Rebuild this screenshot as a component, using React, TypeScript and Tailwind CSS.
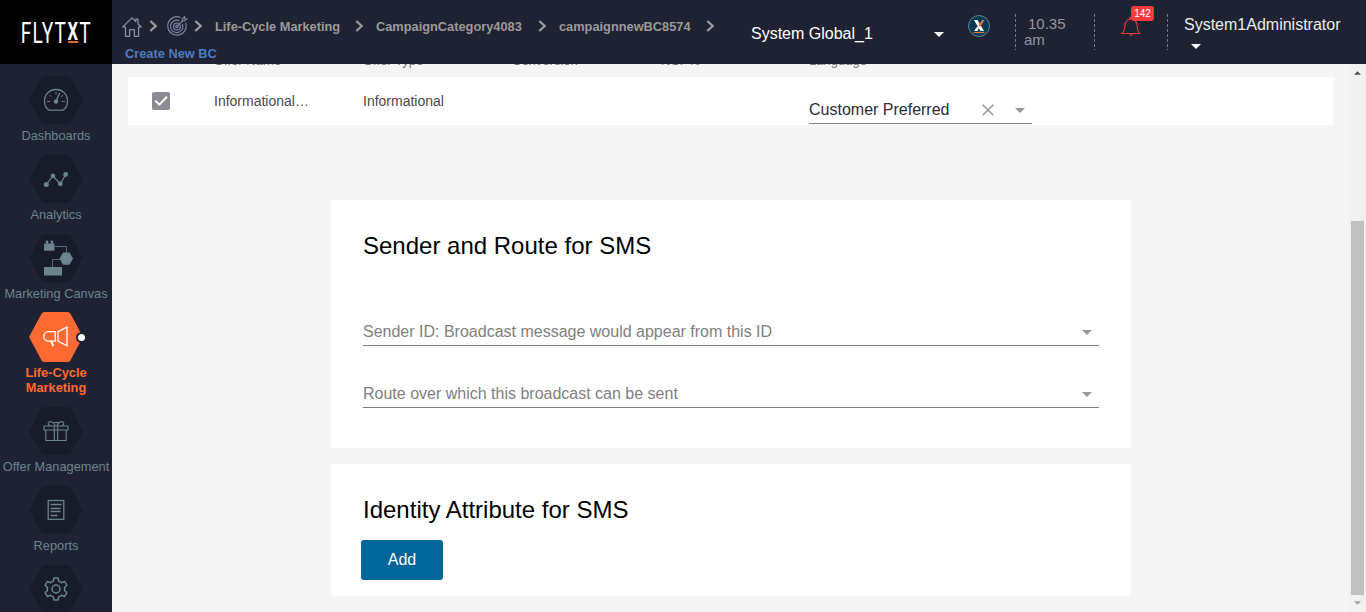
import React from "react";

const Caret = ({ className = "" }: { className?: string }) => (
  <svg className={className} width="10" height="5" viewBox="0 0 10 5" fill="currentColor">
    <path d="M0 0h10L5 5z" />
  </svg>
);

const Chevron = () => (
  <svg className="-mt-px" width="9" height="12" viewBox="0 0 9 12" fill="none" stroke="#9a9a9a" strokeWidth="2.3">
    <path d="M1.3 1l5.4 5-5.4 5" />
  </svg>
);

const HomeIcon = () => (
  <svg width="20" height="20" viewBox="0 0 20 20" fill="none" stroke="#8791a6" strokeWidth="1.3">
    <path d="M3.5 9.900H.8L10 .9l3.800 3.700V2.200h2.200v4.600l3.200 3.100h-2.600v9.400h-4.200v-6.600H7.600v6.600H3.500z" strokeLinejoin="round" />
  </svg>
);

const TargetIcon = () => (
  <svg width="21" height="21" viewBox="0 0 21 21" fill="none" stroke="#79849c" strokeWidth="1.2">
    <path d="M13.6 1.5A9.2 9.2 0 1 0 18.6 6.8" />
    <path d="M12.4 4.8A6.2 6.2 0 1 0 15.4 8" />
    <circle cx="10" cy="10.4" r="3.4" />
    <circle cx="10" cy="10.4" r="1.2" />
    <path d="M10 10.400L16.400 4M15.400 5V2.800L17.600.8v2.200h2.200L17.600 5z" />
  </svg>
);

const Gauge = () => (
  <svg width="26" height="24" viewBox="0 0 26 24" fill="none" stroke="#6b8490" strokeWidth="1.3">
    <path d="M6 22.2C2.600 20 1.500 16.500 1.500 12.800 1.500 6.300 6.500 1.500 13 1.500s11.500 4.800 11.500 11.300c0 3.700-1.100 7.200-4.500 9.400z" />
    <path d="M4.200 13.500h3M18.800 13.500h3M13 4v2.500M6.500 7l1.700 1.700" strokeWidth="1" />
    <path d="M13 13.500L16.700 5" strokeWidth="1.400" />
    <path d="M18.300 9l1.500-2" strokeWidth="1" />
    <circle cx="13" cy="13.500" r="2.300" fill="#6b8490" stroke="none" />
  </svg>
);

const Analytics = () => (
  <svg className="mt-px" width="26" height="18" viewBox="0 0 26 18" fill="#6b8490">
    <path d="M3.300 13.500L10 5l7.300 8L22.700 3.500" fill="none" stroke="#6b8490" strokeWidth="1.200" />
    <circle cx="3.300" cy="13.500" r="2.500" />
    <circle cx="10" cy="4.800" r="2.300" />
    <circle cx="17.300" cy="12.800" r="2.400" />
    <circle cx="22.700" cy="3.500" r="2.400" />
  </svg>
);

const Canvas = () => (
  <svg className="ml-1" width="32" height="36" viewBox="0 0 32 36" fill="#6b8490">
    <path d="M2 4.500a1 1 0 0 1 1-1h8.500a1 1 0 0 1 1 1v5.200a1 1 0 0 1-1 1H3a1 1 0 0 1-1-1z" />
    <circle cx="5" cy="2" r="1.400" />
    <circle cx="10" cy="2" r="1.400" />
    <path d="M4.500 1.500h1v3h-1zM9.500 1.500h1v3h-1z" />
    <path d="M12.500 6.500H24.500V13M18 19.500h-7.500v8" fill="none" stroke="#566b77" strokeWidth="1" />
    <path d="M21 12.500h6.500L31 18.500l-3.500 6.300H21L17.500 18.500z" />
    <rect x="2" y="27" width="18" height="8.500" rx=".5" />
  </svg>
);

const Megaphone = () => (
  <svg className="-mt-px" width="26" height="22" viewBox="0 0 26 22" fill="none" stroke="#fff" strokeWidth="1.300">
    <path d="M12.300 5.700H5.500a4.500 4.500 0 0 0 0 9.400h6.800z" />
    <path d="M15 5.700l9-4.600v18.700l-9-4.700z" />
    <path d="M8 15.200l2.400 5" strokeWidth="1.900" />
  </svg>
);

const Gift = () => (
  <svg width="26" height="22" viewBox="0 0 26 22" fill="none" stroke="#6b8490" strokeWidth="1.100">
    <path d="M1 6h24v4H1zM2.800 10v10.500h20.400V10M11.300 6v14.500M14.700 6v14.500" />
    <path d="M12.200 5.500C10.500 2.200 7.500.9 5.900 2.100c-1.400 1.200-.6 3.200 1.400 3.700M13.800 5.500c1.700-3.300 4.700-4.600 6.300-3.400 1.400 1.200.6 3.200-1.400 3.700M11.200 2.500h3.600v3" />
  </svg>
);

const Report = () => (
  <svg width="18" height="22" viewBox="0 0 18 22" fill="none" stroke="#6b8490" strokeWidth="1.300">
    <rect x="1.200" y="1.500" width="15.600" height="18.800" />
    <path d="M3.500 5.500h11M3.500 9.500h10M3.500 12.500h10M3.500 16.500h7" />
  </svg>
);

const Gear = () => (
  <svg width="24" height="24" viewBox="0 0 24 24" fill="none" stroke="#6b8490" strokeWidth="1.500" strokeLinejoin="round">
    <path d="M10 1h4l.8 3.200 2.600 1.500L20.700 4.500l2.100 3.700-2.200 2.300v3l2.200 2.300-2.100 3.700-3.300-1.200-2.600 1.500L14 23h-4l-.8-3.200-2.600-1.500-3.300 1.200-2.100-3.700 2.200-2.300v-3L1.200 8.200l2.100-3.700 3.300 1.200 2.600-1.500z" />
    <circle cx="12" cy="12" r="4" />
  </svg>
);

const navItems = [
  { label: "Dashboards", icon: <Gauge /> },
  { label: "Analytics", icon: <Analytics /> },
  { label: "Marketing Canvas", icon: <Canvas /> },
  { label: "Life-Cycle Marketing", icon: <Megaphone />, active: true },
  { label: "Offer Management", icon: <Gift /> },
  { label: "Reports", icon: <Report /> },
  { label: "", icon: <Gear /> },
];

function NavItem({ label, icon, active }: { label: string; icon: React.ReactNode; active?: boolean }) {
  return (
    <div className="mb-3 flex flex-col items-center gap-1">
      <div className="relative flex h-12 w-[54px] items-center justify-center">
        <svg className="absolute -top-px left-0" width="54" height="50" viewBox="0 0 54 50">
          {active ? (
            <path d="M15.500 0h23q2 0 3 1.700L54 25 41.500 48.300q-1 1.700-3 1.700h-23q-2 0-3-1.700L0 25 12.500 1.700q1-1.700 3-1.700z" fill="#ff6a33" />
          ) : (
            <path d="M15.500 1h23q2 0 3 1.700L54 25 41.500 47.300q-1 1.700-3 1.700h-23q-2 0-3-1.700L0 25 12.500 2.700q1-1.700 3-1.700z" fill="#181b29" />
          )}
        </svg>
        <div className="relative">{icon}</div>
        {active && (
          <span className="absolute top-[19px] left-[47px] size-[11px] rounded-full border-[2.500px] border-[#1f2232] bg-white" />
        )}
      </div>
      <div
        className={
          active
            ? "w-20 text-center text-[12.8px] leading-[15px] font-bold text-[#ff6a33]"
            : "text-center text-[12.8px] leading-[15px] whitespace-nowrap text-[#6b8490]"
        }
      >
        {label}
      </div>
    </div>
  );
}

function Field({ label }: { label: string }) {
  return (
    <div className="flex h-[26px] items-start justify-between border-b border-[#808080] pr-[7px] text-base leading-6 text-[#808080]">
      <span>{label}</span>
      <Caret className="mt-2.5 text-[#999]" />
    </div>
  );
}

const Divider = () => (
  <svg className="mt-3.5 shrink-0" width="1" height="36" viewBox="0 0 1 36">
    <path d="M.5 0v36" stroke="#777a85" strokeDasharray="3 2" />
  </svg>
);

export default function App() {
  return (
    <div className="flex h-[612px] w-[1366px] overflow-hidden bg-[#f5f5f5] font-['Liberation_Sans',Arial,sans-serif]">
      <aside className="flex w-28 shrink-0 flex-col bg-[#1f2232]">
        <div className="flex h-16 shrink-0 bg-black">
          <svg width="112" height="64" viewBox="0 0 112 64" fill="#fff" fontFamily="Roboto, sans-serif">
            <text transform="translate(20.800 43) scale(.66 1)" fontSize="29" letterSpacing="1.700">FLYT</text>
            <text transform="translate(67.600 40) scale(.65 1)" fontSize="25.500" fontWeight="700">X</text>
            <text transform="translate(79.200 43) scale(.66 1)" fontSize="29">T</text>
            <path d="M68 42h10.300" stroke="#e8622c" strokeWidth="2" />
          </svg>
        </div>
        <nav className="flex flex-col items-center pt-3">
          {navItems.map((item) => (
            <NavItem key={item.label} {...item} />
          ))}
        </nav>
      </aside>

      <div className="flex w-[1254px] flex-col">
        <header className="flex h-16 shrink-0 bg-[#1f2232]">
          <div className="w-[639px] shrink-0 pt-4 pl-2.5 text-[12.8px] font-bold text-[#9a9a9a]">
            <div className="grid h-5 grid-cols-[27px_18px_27px_21px_140px_21px_162px_21px_147px_16px] items-center whitespace-nowrap">
              <HomeIcon />
              <Chevron />
              <TargetIcon />
              <Chevron />
              <span>Life-Cycle Marketing</span>
              <Chevron />
              <span>CampaignCategory4083</span>
              <Chevron />
              <span>campaignnewBC8574</span>
              <Chevron />
            </div>
            <div className="mt-2.5 ml-[3px] leading-[15px] text-[#4a7cc4]">Create New BC</div>
          </div>
          <div className="mt-6 flex h-5 w-[193px] shrink-0 items-center justify-between self-start text-base text-white">
            <span>System Global_1</span>
            <Caret />
          </div>
          <svg className="mt-3.5 ml-[23px] shrink-0" width="24" height="24" viewBox="0 0 24 24">
            <circle cx="12" cy="12" r="10.500" fill="#033a54" stroke="#7c98a8" strokeWidth=".8" />
            <path d="M7 6h3.500l6.500 11h-3.500z" fill="#fff" />
            <path d="M10.300 12.500l2 1.500-2 3H7z" fill="#fff" />
            <path d="M11.500 11.500L15 6h2.500l-4.200 7z" fill="#f0703d" />
            <path d="M6.500 18.500h11" stroke="#f0703d" strokeWidth="1.200" />
          </svg>
          <div className="ml-6 flex">
            <Divider />
            <div className="mt-4 ml-2 w-[70px] pr-5 text-[15px] leading-4 text-[#96979d]">
              <span className="ml-1">10.35</span> am
            </div>
            <Divider />
            <div className="relative mt-[17px] ml-[26px] w-[46px]">
              <svg width="20" height="20" viewBox="0 0 20 20" fill="none" stroke="#e8343c" strokeWidth="1.200">
                <path d="M1 16.500c2-1.500 2.500-3.500 2.800-7.200C4.100 5 6 2 10 2s5.900 3 6.200 7.300c.3 3.700.8 5.700 2.800 7.200z" strokeLinejoin="round" />
                <path d="M9 2V.8h2V2M8.600 17.700h2.800" strokeWidth="1.500" />
              </svg>
              <span className="absolute -top-[11px] left-[10px] h-[15px] w-[23px] rounded-[3px] bg-[#fb3a3f] text-center text-[10px] leading-[15px] text-white">142</span>
            </div>
            <Divider />
            <div className="mt-4 ml-4 text-base leading-[18px] text-[#ececee]">
              <div>System1Administrator</div>
              <Caret className="mt-2.5 ml-[7px] text-white" />
            </div>
          </div>
        </header>

        <div className="flex h-[548px]">
          <main className="w-[1237px] overflow-hidden px-4">
            <div className="-mt-[11px] mb-[9px] grid h-[15px] grid-cols-[149px_149px_149px_148px_auto] pl-[86px] text-[13px] leading-[15px] text-[#757575]">
              <span>Offer Name</span>
              <span>Offer Type</span>
              <span>Conversion</span>
              <span>NCP%</span>
              <span>Language</span>
            </div>
            <div className="flex h-12 bg-white text-sm text-[#4a4a4a]">
              <div className="mt-[15px] ml-6 size-[18px] rounded-[2px] bg-[#8b8b94]">
                <svg width="18" height="18" viewBox="0 0 18 18" fill="none" stroke="#fff" strokeWidth="2">
                  <path d="M3.300 8.600l4 4 7.700-7.800" />
                </svg>
              </div>
              <span className="ml-11 w-[149px] leading-[48px]">Informational…</span>
              <span className="w-[446px] leading-[48px]">Informational</span>
              <div className="flex h-[47px] w-[223px] items-center border-b border-[#808080] pt-5 text-base text-[#2b2b3a]">
                <span className="w-[173px]">Customer Preferred</span>
                <svg width="12" height="12" viewBox="0 0 12 12" stroke="#999" strokeWidth="1.500">
                  <path d="M.7.7l10.600 10.600M11.300.7L.7 11.300" />
                </svg>
                <Caret className="ml-[21px] text-[#999]" />
              </div>
            </div>

            <section className="mt-[75px] ml-[203px] h-[248px] w-[800px] rounded-[3px] bg-white px-8 pt-[30px]">
              <h2 className="text-2xl leading-8 text-black">Sender and Route for SMS</h2>
              <div className="mt-[58px] flex flex-col gap-9">
                <Field label="Sender ID: Broadcast message would appear from this ID" />
                <Field label="Route over which this broadcast can be sent" />
              </div>
            </section>
            <section className="mt-4 ml-[203px] h-[132px] w-[800px] rounded-[3px] bg-white px-[30px] pt-[30px]">
              <h2 className="pl-0.5 text-2xl leading-8 text-black">Identity Attribute for SMS</h2>
              <button className="mt-3.5 block h-10 w-[82px] rounded-[3px] bg-[#006699] text-base text-white">Add</button>
            </section>
          </main>
          <div className="flex w-[17px] flex-col items-center bg-[#f1f1f1] pt-[7px]">
            <Caret className="h-1 w-[7px] rotate-180 text-[#505050]" />
            <div className="mt-[146px] h-[374px] w-[13px] bg-[#c1c1c1]" />
            <Caret className="mt-1.5 h-1 w-[7px] text-[#a3a3a3]" />
          </div>
        </div>
      </div>
    </div>
  );
}
